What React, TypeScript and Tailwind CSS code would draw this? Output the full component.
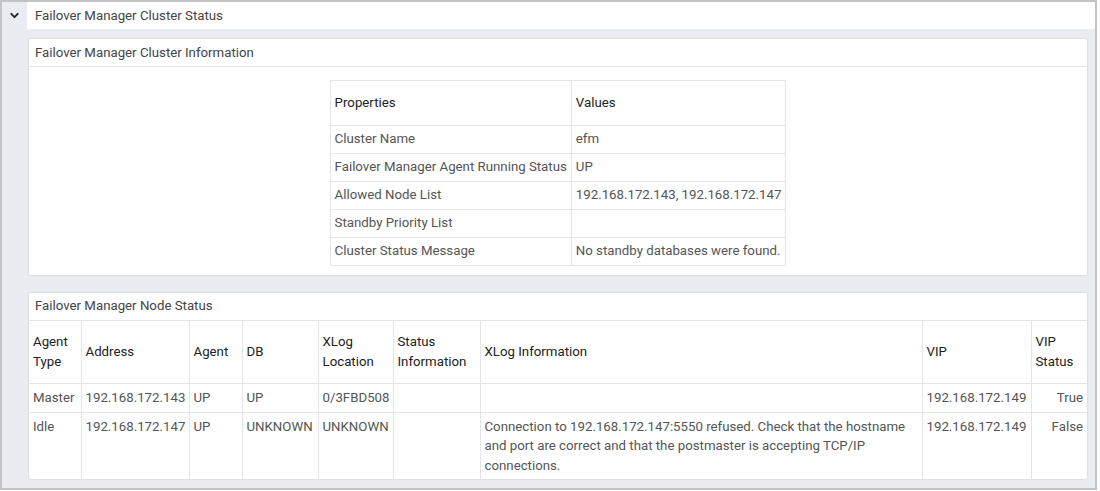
import { ChevronDown } from 'lucide-react';

const clusterInfo: [string, string][] = [
  ['Cluster Name', 'efm'],
  ['Failover Manager Agent Running Status', 'UP'],
  ['Allowed Node List', '192.168.172.143, 192.168.172.147'],
  ['Standby Priority List', ''],
  ['Cluster Status Message', 'No standby databases were found.'],
];

const nodeCols = [
  { label: 'Agent Type', w: 'w-[52px]' },
  { label: 'Address', w: 'w-[108px]' },
  { label: 'Agent', w: 'w-[53px]' },
  { label: 'DB', w: 'w-[76px]' },
  { label: 'XLog Location', w: 'w-[75px]' },
  { label: 'Status Information', w: 'w-[87px]' },
  { label: 'XLog Information', w: 'w-[442px]' },
  { label: 'VIP', w: 'w-[109px]' },
  { label: 'VIP Status', w: '' },
];

const nodes = [
  ['Master', '192.168.172.143', 'UP', 'UP', '0/3FBD508', '', '', '192.168.172.149', 'True'],
  [
    'Idle',
    '192.168.172.147',
    'UP',
    'UNKNOWN',
    'UNKNOWN',
    '',
    'Connection to 192.168.172.147:5550 refused. Check that the hostname and port are correct and that the postmaster is accepting TCP/IP connections.',
    '192.168.172.149',
    'False',
  ],
];

const thCls = 'border border-[#e2e5e9] px-[4px] py-[12px] text-left font-normal text-[#222] align-middle whitespace-nowrap';
const tdCls = 'border border-[#e2e5e9] px-[4px] py-[3px] text-left text-[#555] align-top whitespace-nowrap';
const nodeTd = 'border border-[#e2e5e9] px-[4px] py-[4px] text-left text-[#555] align-top';

function Card({ title, children }: { title: string; children: React.ReactNode }) {
  return (
    <div className="bg-white border border-[#dde1e6] rounded-[3px]">
      <div className="h-[28px] flex items-center px-[6px] border-b border-[#e2e5e9] text-[#444]">
        {title}
      </div>
      {children}
    </div>
  );
}

export default function App() {
  return (
    <div
      className="w-[1097px] h-[490px] border-2 border-[#c2c3c7] bg-[#e9ecf0] text-[13.25px] leading-[19.5px]"
      style={{ fontFamily: 'Roboto, "Noto Sans", sans-serif' }}
    >
      {/* Panel header */}
      <div className="flex h-[27px]">
        <div className="w-[25px] flex items-center justify-center">
          <ChevronDown className="w-[13px] h-[13px] text-[#222]" strokeWidth={3.5} />
        </div>
        <div className="flex-1 bg-white flex items-center px-[8px] text-[#444]">
          Failover Manager Cluster Status
        </div>
      </div>

      <div className="pl-[26px] pr-[7px] pt-[9px] flex flex-col gap-[16px]">
        {/* Cluster information */}
        <Card title="Failover Manager Cluster Information">
          <div className="flex justify-center pt-[13px] pb-[9px]">
            <table className="border-collapse border border-[#e2e5e9]">
              <thead>
                <tr>
                  <th className={`${thCls} w-[240px]`}>Properties</th>
                  <th className={`${thCls} w-[214px]`}>Values</th>
                </tr>
              </thead>
              <tbody>
                {clusterInfo.map(([k, v]) => (
                  <tr key={k} className="h-[28px]">
                    <td className={tdCls}>{k}</td>
                    <td className={tdCls}>{v}</td>
                  </tr>
                ))}
              </tbody>
            </table>
          </div>
        </Card>

        {/* Node status */}
        <Card title="Failover Manager Node Status">
          <table className="w-full table-fixed border-collapse border-hidden">
            <colgroup>
              {nodeCols.map((c) => (
                <col key={c.label} className={c.w} />
              ))}
            </colgroup>
            <thead>
              <tr className="h-[63px]">
                {nodeCols.map((c) => (
                  <th key={c.label} className="border border-[#e2e5e9] px-[4px] py-[2px] text-left font-normal text-[#222] align-middle">
                    {c.label}
                  </th>
                ))}
              </tr>
            </thead>
            <tbody>
              {nodes.map((row) => (
                <tr key={row[0]} className="h-[28px]">
                  {row.map((cell, i) => (
                    <td
                      key={i}
                      className={
                        i === 8
                          ? 'border border-[#e2e5e9] px-[4px] py-[4px] text-right text-[#555] align-top'
                          : nodeTd
                      }
                    >
                      {cell}
                    </td>
                  ))}
                </tr>
              ))}
            </tbody>
          </table>
        </Card>
      </div>
    </div>
  );
}
